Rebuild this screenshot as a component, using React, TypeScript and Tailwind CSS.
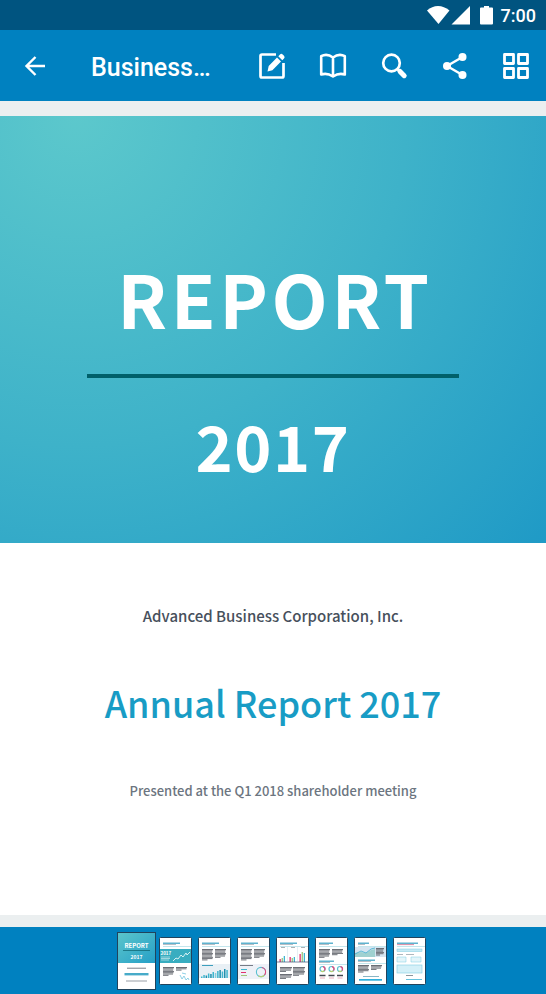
import type { ReactNode } from 'react';

function Sheet({ children }: { children: ReactNode }) {
  return (
    <svg viewBox="0 0 33 48" className="h-12 w-[33px]" aria-hidden="true">
      <rect x="0.5" y="0.5" width="32" height="47" rx="1" fill="#fff" />
      {children}
      <rect x="0.5" y="0.5" width="32" height="47" rx="1" fill="none" stroke="#21435c" />
    </svg>
  );
}

function Heading({ y = 6, w = 17 }: { y?: number; w?: number }) {
  return (
    <g>
      <rect x="4" y={y - 0.5} width={w} height="1.5" fill="#5fb3cf" />
      <rect x="4" y={y + 1.2} width={w - 4} height="0.8" fill="#a5afb8" />
      <rect x="4" y={y + 3} width="28" height="0.7" fill="#a9dbe6" />
    </g>
  );
}

function Copy({ x, y, rows, w = 11 }: { x: number; y: number; rows: number; w?: number }) {
  return (
    <g fill="#6b6e75">
      {Array.from({ length: rows }, (_, i) => (
        <rect key={i} x={x} y={y + i * 1.3} width={i === rows - 1 ? w * 0.5 : w - (i % 3) * 0.5} height="1" />
      ))}
    </g>
  );
}

function Bars({ x, y, items, w = 1.3 }: { x: number; y: number; items: [number, string][]; w?: number }) {
  return (
    <g>
      {items.map(([h, c], i) => (
        <rect key={i} x={x + i * (w + 0.8)} y={y - h} width={w} height={h} fill={c} />
      ))}
    </g>
  );
}

function Ring({ x, y, r, sw }: { x: number; y: number; r: number; sw: number }) {
  return (
    <g fill="none" strokeWidth={sw}>
      <circle cx={x} cy={y} r={r} stroke="#58bfd0" />
      <circle cx={x} cy={y} r={r} stroke="#e5477d" pathLength={100} strokeDasharray="34 66" transform={`rotate(-80 ${x} ${y})`} />
      <circle cx={x} cy={y} r={r} stroke="#b9cf72" pathLength={100} strokeDasharray="22 78" transform={`rotate(45 ${x} ${y})`} />
    </g>
  );
}

const pink = '#e32f6f';
const green = '#9fc37a';
const cyan = '#3fb6cf';
const teal = '#228fae';

const thumbs: { label: string; art: ReactNode }[] = [
  {
    label: 'Page 1',
    art: (
      <svg viewBox="0 0 39 58" className="h-[58px] w-[39px]" aria-hidden="true">
        <defs>
          <linearGradient id="cover" x1="0" y1="0" x2="1" y2="1">
            <stop offset="0" stopColor="#5cc6cb" />
            <stop offset="1" stopColor="#259fc7" />
          </linearGradient>
        </defs>
        <rect width="39" height="58" fill="#fff" />
        <rect width="39" height="31" fill="url(#cover)" />
        <text x="19.5" y="15.5" textAnchor="middle" fontSize="6" fontWeight="700" fill="#fff" fontFamily="'Noto Sans CJK SC', sans-serif">REPORT</text>
        <rect x="6" y="18" width="27" height="0.8" fill="#136b78" />
        <text x="19.5" y="26.5" textAnchor="middle" fontSize="5" fontWeight="700" fill="#fff" fontFamily="'Noto Sans CJK SC', sans-serif">2017</text>
        <rect x="10" y="35.7" width="19" height="1" fill="#7c8189" />
        <rect x="7.5" y="41" width="24" height="2.4" fill="#47abc9" />
        <rect x="9" y="48.5" width="21" height="1" fill="#9a9fa7" />
        <rect x="0.5" y="0.5" width="38" height="57" fill="none" stroke="#21435c" />
      </svg>
    ),
  },
  {
    label: 'Page 2',
    art: (
      <Sheet>
        <Heading />
        <rect x="1" y="12" width="31" height="14" fill="#38adc0" />
        <text x="1.5" y="17.5" fontSize="4.5" fontWeight="700" fill="#fff" fontFamily="'Noto Sans CJK SC', sans-serif">2017</text>
        <path d="M2 20h9M2 21.5h9M2 23h8" stroke="#b9e2e8" strokeWidth="0.8" />
        <path d="M14 24l3-3 2 1 3-4 2 2 3-4 1 2 3-3" fill="none" stroke="#e7f7f8" strokeWidth="0.9" />
        <Copy x={4} y={30} rows={7} />
        <Copy x={17} y={30} rows={3} />
        <path d="M21 38l2 4 2-3 2 4 2-2 1 2M23 36l4 1" fill="none" stroke="#72c5df" strokeWidth="0.8" />
      </Sheet>
    ),
  },
  {
    label: 'Page 3',
    art: (
      <Sheet>
        <Heading />
        <Copy x={4} y={12} rows={9} />
        <Copy x={17} y={12} rows={7} />
        <rect x="1" y="27" width="31" height="14" fill="#e9f0f5" />
        <rect x="4" y="28" width="11" height="1" fill="#3e9fbd" />
        <Bars x={3} y={41} w={1.5} items={[[1.5, cyan], [3, cyan], [2.5, teal], [4.5, cyan], [4, teal], [6, cyan], [5, '#86cbd9'], [7, cyan], [8, teal], [6.5, cyan], [9, teal], [8, cyan]]} />
      </Sheet>
    ),
  },
  {
    label: 'Page 4',
    art: (
      <Sheet>
        <Heading />
        <Copy x={4} y={12} rows={9} />
        <Copy x={17} y={12} rows={7} />
        <rect x="1" y="27" width="31" height="15" fill="#eef1f7" />
        <rect x="3" y="28" width="13" height="1" fill="#777c86" />
        <rect x="4" y="32" width="6" height="1" fill={cyan} />
        <rect x="4" y="35" width="5" height="1" fill={pink} />
        <rect x="4" y="38" width="6" height="1" fill={green} />
        <Ring x={24} y={35} r={4.6} sw={1.1} />
      </Sheet>
    ),
  },
  {
    label: 'Page 5',
    art: (
      <Sheet>
        <Heading />
        <path d="M11.5 10v14M21.5 10v14" stroke="#d5e4ec" strokeWidth="0.6" />
        <path d="M5 10.5h4M15 10.5h4M25 10.5h4" stroke="#8b9097" strokeWidth="0.7" />
        <Bars x={3.5} y={25} items={[[3, pink], [4, green], [6, cyan]]} />
        <Bars x={13.5} y={25} items={[[5, pink], [4, green], [5, cyan]]} />
        <Bars x={23.5} y={25} items={[[8, pink], [10, green], [9, cyan]]} />
        <path d="M1 25h31" stroke="#3d4f70" strokeWidth="0.7" />
        <Copy x={4} y={30} rows={4} w={12} />
        <Copy x={4} y={37} rows={4} w={12} />
        <Copy x={17} y={30} rows={7} w={12} />
      </Sheet>
    ),
  },
  {
    label: 'Page 6',
    art: (
      <Sheet>
        <Heading w={14} />
        <Copy x={4} y={12} rows={7} />
        <Copy x={17} y={12} rows={5} />
        <Heading y={24} w={15} />
        <Ring x={7.5} y={32} r={2.5} sw={1.2} />
        <Ring x={16.5} y={32} r={2.5} sw={1.2} />
        <Ring x={25} y={32} r={2.5} sw={1.2} />
        <path d="M4.5 38.5h6M13.5 38.5h6M22 38.5h6" stroke="#444951" strokeWidth="1.4" />
        <path d="M5 41h5M14 41h5M22.5 41h5" stroke="#e7a3b6" strokeWidth="0.9" />
      </Sheet>
    ),
  },
  {
    label: 'Page 7',
    art: (
      <Sheet>
        <Heading w={11} />
        <rect x="1" y="10" width="31" height="10" fill="#d5e5f1" />
        <path d="M1 16l6-1 5 1 5-3 4-1v8H1z" fill="#7cc3bb" opacity="0.6" />
        <path d="M1 17l6-3 5 2 5-4 4-1" fill="none" stroke="#3faed0" strokeWidth="0.8" />
        <Copy x={22} y={11} rows={6} w={8} />
        <Heading y={23} />
        <Copy x={4} y={28} rows={6} />
        <Copy x={17} y={28} rows={4} />
        <rect x="9" y="39" width="16" height="1" fill="#8ab6c5" />
        <rect x="5" y="42" width="23" height="1.7" fill="#30b0dc" />
      </Sheet>
    ),
  },
  {
    label: 'Page 8',
    art: (
      <Sheet>
        <Heading w={21} />
        <rect x="4" y="7.2" width="17" height="0.9" fill="#e58ba5" />
        <rect x="4" y="12" width="25" height="2.5" fill="#c6eaf4" stroke="#7fcce2" strokeWidth="0.5" />
        <path d="M4 17.5h6M13 17.5h8" stroke="#9aa6ad" strokeWidth="0.8" />
        <path d="M4 20h9v5H4zM18 20h10v5H18z" fill="#e3f5fa" stroke="#7fcce2" strokeWidth="0.5" />
        <rect x="4" y="28" width="25" height="8" fill="#d4f0f8" stroke="#7fcce2" strokeWidth="0.6" />
        <rect x="13" y="38" width="7" height="1" fill="#8d969d" />
        <rect x="13" y="42" width="16" height="1" fill="#63c2dd" />
      </Sheet>
    ),
  },
];

function IconButton({ label, children }: { label: string; children: ReactNode }) {
  return (
    <button type="button" aria-label={label} className="flex size-8 items-center justify-center text-white">
      {children}
    </button>
  );
}

export default function App() {
  return (
    <div className="flex min-h-screen flex-col bg-[#ebeff0] font-['Roboto',sans-serif]">
      <div className="flex h-[30px] items-center justify-end bg-[#005480] pt-0.5 pr-2.5 text-white">
        <svg viewBox="0 0 68 20" className="mr-1.5 h-5 w-[68px]" fill="currentColor" aria-hidden="true">
          <path d="M0 4.5Q5 0 11 0t11.5 4.5L11.500 18z" />
          <path d="M43 0v18.500H24.500z" />
          <path d="M54 1.500h3V0h5v1.500h3q1 0 1 1v15q0 1-1 1H54q-1 0-1-1v-15q0-1 1-1z" />
        </svg>
        <span className="text-lg leading-5 font-medium">7:00</span>
      </div>

      <header className="flex h-[71px] items-center bg-[#0081c0] pr-3.5 pl-[19px] text-white">
        <IconButton label="Back">
          <svg viewBox="0 0 24 24" className="size-6" fill="none" stroke="currentColor" strokeWidth="2.4" aria-hidden="true">
            <path d="M22 12H4M12.500 3L3.500 12l9 9" />
          </svg>
        </IconButton>
        <h1 className="ml-10 min-w-0 flex-1 truncate pt-1 text-[25px] leading-8 font-medium">Business…</h1>
        <div className="flex items-center gap-[29px]">
          <IconButton label="Annotate">
            <svg viewBox="0 0 28 28" className="size-7 shrink-0" aria-hidden="true">
              <path d="M18 2.500H4q-1.500 0-1.500 1.500v20q0 1.500 1.500 1.500h20q1.500 0 1.500-1.500V11" fill="none" stroke="currentColor" strokeWidth="2.7" />
              <path d="M9.500 19.500l1.200-5.400L19 5.500l4 4-8.600 8.700zM20.300 4.300L22 2.500q1.300-1.300 2.700 0l1.300 1.300q1.300 1.400 0 2.700L24.300 8.300z" fill="currentColor" />
            </svg>
          </IconButton>
          <IconButton label="Reader view">
            <svg viewBox="0 0 28 28" className="size-7 shrink-0" fill="none" stroke="currentColor" strokeWidth="2.6" strokeLinejoin="round" aria-hidden="true">
              <path d="M14 5.500Q8 1 2.200 4.200v18.300q6-2 11.800 2 5.800-4 11.800-2V4.200Q20 1 14 5.500zM14 5.500v19" />
            </svg>
          </IconButton>
          <IconButton label="Search">
            <svg viewBox="0 0 28 28" className="size-7 shrink-0" fill="none" stroke="currentColor" aria-hidden="true">
              <circle cx="11.5" cy="11" r="8.3" strokeWidth="2.7" />
              <path d="M17.500 17l2 2" strokeWidth="3" />
              <path d="M20 19.500l4.200 4.200" strokeWidth="5" strokeLinecap="round" />
            </svg>
          </IconButton>
          <IconButton label="Share">
            <svg viewBox="0 0 28 28" className="size-7 shrink-0" fill="currentColor" aria-hidden="true">
              <path d="M21.500 5L6 14l15.500 9" fill="none" stroke="currentColor" strokeWidth="2.4" />
              <circle cx="21.5" cy="5" r="4" />
              <circle cx="6" cy="14" r="4" />
              <circle cx="21.5" cy="23" r="4" />
            </svg>
          </IconButton>
          <IconButton label="Document overview">
            <svg viewBox="0 0 28 28" className="size-7 shrink-0" fill="none" stroke="currentColor" strokeWidth="2.8" strokeLinejoin="round" aria-hidden="true">
              <path d="M2.500 2.500h9v9h-9zM16.500 2.500h9v9h-9zM2.500 16.500h9v9h-9zM16.500 16.500h9v9h-9z" />
            </svg>
          </IconButton>
        </div>
      </header>

      <main className="mt-[15px] mb-3 flex flex-1 flex-col bg-white text-center font-['Noto_Sans_CJK_SC',sans-serif]">
        <section className="flex h-[427px] flex-col items-center bg-[radial-gradient(circle_farthest-corner_at_14%_0%,#5cc8cc_0%,#3eb2c9_52%,#1f9ac6_100%)] pt-[133px] font-bold text-white">
          <h2 className="pl-1 text-[73px] leading-[96px] tracking-wider">REPORT</h2>
          <hr className="mt-[29px] h-1 w-[68%] border-0 bg-[#00606a]" />
          <p className="mt-[19px] text-[63px] leading-[96px] tracking-wide">2017</p>
        </section>
        <p className="mt-[61px] text-[15px] leading-6 font-medium text-[#47505c]">Advanced Business Corporation, Inc.</p>
        <p className="mt-[47px] text-4xl leading-[54px] font-medium text-[#189cc5]">Annual Report 2017</p>
        <p className="mt-[52px] text-[13px] leading-5 font-medium text-[#6c7580]">Presented at the Q1 2018 shareholder meeting</p>
      </main>

      <nav aria-label="Pages" className="flex h-[67px] items-center justify-center bg-[#0081c0] pt-px">
        {thumbs.map((t) => (
          <button key={t.label} type="button" aria-label={t.label} className="flex w-[39px] justify-center">
            {t.art}
          </button>
        ))}
      </nav>
    </div>
  );
}
